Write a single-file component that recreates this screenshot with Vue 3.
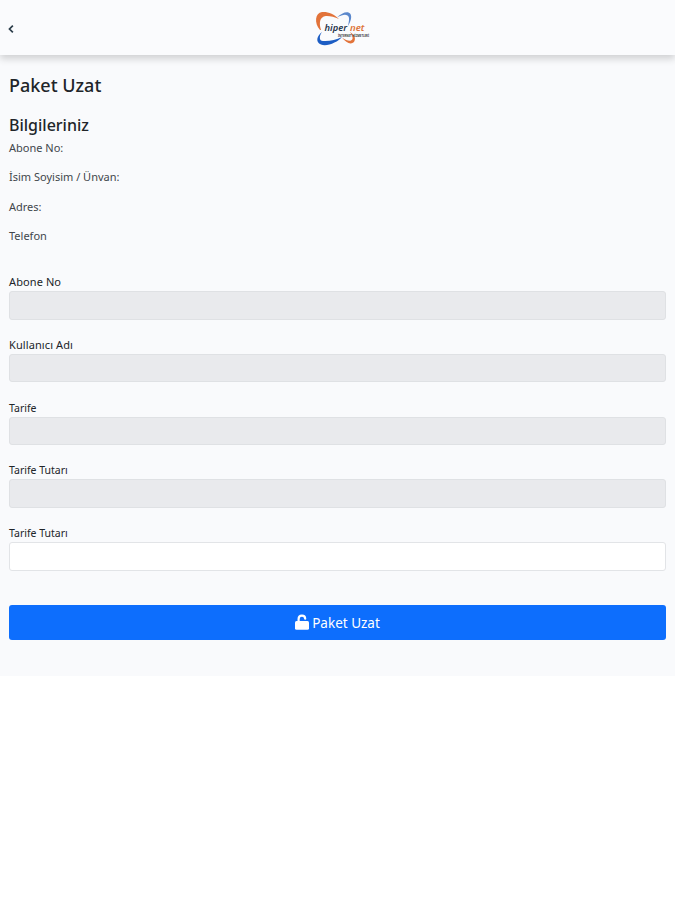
<template>
  <div class="page">
    <header class="topbar">
      <button class="back" type="button" aria-label="Geri">
        <svg viewBox="0 0 8 12" width="6" height="10">
          <path d="M6.5 1.5 L2 6 L6.5 10.5" fill="none" stroke="#2b3d4a" stroke-width="2.3" />
        </svg>
      </button>
      <!-- Logo -->
      <svg class="logo" viewBox="0 0 60 40" width="60" height="40">
        <path d="M6 22 C0 15 1 5 8 4 C14 3.5 20 6 25 11 C19 8.5 12 7 9 9 C5 11 5.5 17 7 22 Z" fill="#e2733a" />
        <path d="M23 9.5 C28 4.5 34 2.5 36.5 6 C38 9 37 13 34 18 C35 13 36 9 33.5 7.5 C31 6 28 7 23 9.5 Z" fill="#5b88cc" />
        <path d="M8 24 C5 28 5 33 9 33 C15 33.5 22 32 28 29 C24 34 13 39 7 36.5 C1 34 3 28 8 24 Z" fill="#1c5dc4" />
        <path d="M28 29.5 C33 33 37 34 38.5 31 C39 29 38 27 36 24 C41 27 42 31 40 34 C37 37 32 35 28 29.5 Z" fill="#e2733a" />
        <text x="10.5" y="22.5" class="logo-hiper" textLength="22.5" lengthAdjust="spacingAndGlyphs">hiper</text>
        <text x="36" y="22.5" class="logo-net" textLength="14.5" lengthAdjust="spacingAndGlyphs">net</text>
        <text x="24" y="28.5" class="logo-sub" textLength="31" lengthAdjust="spacingAndGlyphs">İNTERNET HİZMETLERİ</text>
      </svg>
    </header>

    <main class="content">
      <h1>Paket Uzat</h1>
      <h2>Bilgileriniz</h2>
      <!-- Abone bilgileri -->
      <ul class="info">
        <li v-for="(bilgi, i) in bilgiler" :key="i">{{ bilgi }}</li>
      </ul>

      <form @submit.prevent>
        <div v-for="(alan, i) in alanlar" :key="i" class="field">
          <label :for="'alan' + i">{{ alan.etiket }}</label>
          <input :id="'alan' + i" v-model="alan.deger" type="text" :disabled="alan.kilitli">
        </div>
        <button class="submit" type="submit">
          <svg viewBox="0 0 14 16" width="14" height="16">
            <path d="M3.6 8 V5 C3.6 0.6 10 0.4 10.2 4.7" fill="none" stroke="#fff" stroke-width="2.2" stroke-linecap="round" />
            <rect y="7" width="14" height="8.7" rx="1.5" fill="#fff" />
          </svg>
          <span>Paket Uzat</span>
        </button>
      </form>
    </main>
  </div>
</template>

<script setup>
import { ref } from 'vue'

const bilgiler = ['Abone No:', 'İsim Soyisim / Ünvan:', 'Adres:', 'Telefon']

// Son alan dışındakiler sadece gösterim amaçlı
const alanlar = ref([
  { etiket: 'Abone No', deger: '', kilitli: true },
  { etiket: 'Kullanıcı Adı', deger: '', kilitli: true },
  { etiket: 'Tarife', deger: '', kilitli: true },
  { etiket: 'Tarife Tutarı', deger: '', kilitli: true },
  { etiket: 'Tarife Tutarı', deger: '', kilitli: false }
])
</script>

<style>
body {
  background: #fff;
}
</style>

<style scoped>
* {
  box-sizing: border-box;
}

.page {
  height: 676px;
  background: #f9fafc;
  color: #212529;
  font-family: "Noto Sans", "Open Sans", sans-serif;
}

.topbar {
  display: grid;
  grid-template-columns: 1fr 60px 1fr;
  align-items: center;
  height: 55px;
  background: #fafbfd;
  box-shadow: 0 4px 7px rgba(0, 0, 0, 0.16);
}

.back {
  display: flex;
  width: 24px;
  padding: 2px 0 0 8px;
  border: 0;
  background: none;
}

.logo {
  display: block;
  margin-left: 6px;
}

.logo-hiper,
.logo-net {
  font-size: 9px;
  font-style: italic;
  font-weight: 600;
  fill: #26354c;
}

.logo-net {
  fill: #dd7338;
}

.logo-sub {
  font-size: 3px;
  font-weight: 700;
  fill: #3b3b42;
}

.content {
  padding: 18px 9px 0;
}

h1,
h2 {
  margin: 0;
  font-weight: 500;
}

h1 {
  height: 40px;
  font-size: 18px;
  line-height: 24px;
}

h2 {
  height: 24px;
  font-size: 16px;
  line-height: 24px;
}

.info {
  height: 136px;
  margin: 0;
  padding: 0;
  list-style: none;
}

.info li {
  height: 29.4px;
  font-size: 11px;
  line-height: 22px;
  color: #41464b;
}

.field {
  height: 62.8px;
}

label {
  display: block;
  height: 18px;
  font-size: 10.5px;
  line-height: 18px;
}

.field:nth-child(-n + 2) label {
  font-size: 11px;
  letter-spacing: 0.1px;
}

input {
  display: block;
  width: 100%;
  height: 28.5px;
  padding: 0 8px;
  border: 1px solid #e2e4e7;
  border-radius: 3px;
  background: #fff;
}

input:disabled {
  background: #e9eaed;
  border-color: #dfe1e4;
}

.submit {
  display: flex;
  align-items: center;
  justify-content: center;
  gap: 3px;
  width: 100%;
  height: 35px;
  margin-top: 18px;
  padding: 0;
  border: 0;
  border-radius: 3px;
  background: #0d6efd;
  color: #fff;
  font-family: inherit;
  font-size: 13.5px;
}

.submit span {
  padding-top: 2px;
}
</style>
